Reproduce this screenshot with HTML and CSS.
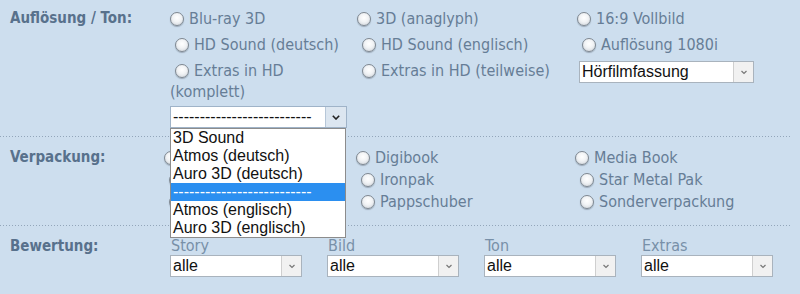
FILE: index.html
```html
<!DOCTYPE html>
<html lang="de">
<head>
<meta charset="utf-8">
<title>Filter</title>
<link rel="stylesheet" href="styles.css">
</head>
<body>
<div class="page">
  <section class="sec sec-res">
    <div class="lbl">Auflösung / Ton:</div>
    <div class="col">
      <label class="opt"><span class="radio"></span>Blu-ray 3D</label>
      <label class="opt ind"><span class="radio"></span>HD Sound (deutsch)</label>
      <label class="opt ind wrap"><span class="radio"></span>Extras in HD (komplett)</label>
      <div class="sel sel-open">
        <span class="sel-val">--------------------------</span>
        <span class="sel-btn"><svg width="8" height="5" viewBox="0 0 8 5"><polyline points="0.8,0.8 4,4 7.2,0.8" fill="none" stroke="#222" stroke-width="1.6"/></svg></span>
        <ul class="drop">
          <li>3D Sound</li>
          <li>Atmos (deutsch)</li>
          <li>Auro 3D (deutsch)</li>
          <li class="hl">--------------------------</li>
          <li>Atmos (englisch)</li>
          <li>Auro 3D (englisch)</li>
        </ul>
      </div>
    </div>
    <div class="col">
      <label class="opt"><span class="radio"></span>3D (anaglyph)</label>
      <label class="opt ind"><span class="radio"></span>HD Sound (englisch)</label>
      <label class="opt ind"><span class="radio"></span>Extras in HD (teilweise)</label>
    </div>
    <div class="col">
      <label class="opt"><span class="radio"></span>16:9 Vollbild</label>
      <label class="opt ind"><span class="radio"></span>Auflösung 1080i</label>
      <div class="sel sel-wide">
        <span class="sel-val">Hörfilmfassung</span>
        <span class="sel-btn"><svg width="8" height="5" viewBox="0 0 8 5"><polyline points="1.5,1 4,3.5 6.5,1" fill="none" stroke="#777" stroke-width="1.2"/></svg></span>
      </div>
    </div>
  </section>
  <div class="sep"></div>
  <section class="sec sec-pack">
    <div class="lbl">Verpackung:</div>
    <div class="col">
      <label class="opt"><span class="radio"></span></label>
      <label class="opt ind"><span class="radio"></span></label>
      <label class="opt ind"><span class="radio"></span></label>
    </div>
    <div class="col">
      <label class="opt"><span class="radio"></span>Digibook</label>
      <label class="opt ind"><span class="radio"></span>Ironpak</label>
      <label class="opt ind"><span class="radio"></span>Pappschuber</label>
    </div>
    <div class="col">
      <label class="opt"><span class="radio"></span>Media Book</label>
      <label class="opt ind"><span class="radio"></span>Star Metal Pak</label>
      <label class="opt ind"><span class="radio"></span>Sonderverpackung</label>
    </div>
  </section>
  <div class="sep"></div>
  <section class="sec sec-rate">
    <div class="lbl">Bewertung:</div>
    <div class="rcol">
      <div class="sub">Story</div>
      <div class="sel sel-rate"><span class="sel-val">alle</span><span class="sel-btn"><svg width="8" height="5" viewBox="0 0 8 5"><polyline points="1.5,1 4,3.5 6.5,1" fill="none" stroke="#777" stroke-width="1.2"/></svg></span></div>
    </div>
    <div class="rcol">
      <div class="sub">Bild</div>
      <div class="sel sel-rate"><span class="sel-val">alle</span><span class="sel-btn"><svg width="8" height="5" viewBox="0 0 8 5"><polyline points="1.5,1 4,3.5 6.5,1" fill="none" stroke="#777" stroke-width="1.2"/></svg></span></div>
    </div>
    <div class="rcol">
      <div class="sub">Ton</div>
      <div class="sel sel-rate"><span class="sel-val">alle</span><span class="sel-btn"><svg width="8" height="5" viewBox="0 0 8 5"><polyline points="1.5,1 4,3.5 6.5,1" fill="none" stroke="#777" stroke-width="1.2"/></svg></span></div>
    </div>
    <div class="rcol">
      <div class="sub">Extras</div>
      <div class="sel sel-rate"><span class="sel-val">alle</span><span class="sel-btn"><svg width="8" height="5" viewBox="0 0 8 5"><polyline points="1.5,1 4,3.5 6.5,1" fill="none" stroke="#777" stroke-width="1.2"/></svg></span></div>
    </div>
  </section>
</div>
</body>
</html>
```

FILE: styles.css
```css
html, body {
  margin: 0;
  padding: 0;
  background: #cddeee;
}
body {
  width: 800px;
  height: 294px;
  overflow: hidden;
  font-family: "DejaVu Sans Condensed", "DejaVu Sans", sans-serif;
  font-size: 16px;
  color: #667d96;
}
.page {
  display: flex;
  flex-direction: column;
}
.sec {
  display: grid;
  align-items: start;
}
.sec-res {
  grid-template-columns: 170px 187px 220px 1fr;
  padding: 8px 0 8px 0;
}
.sec-pack {
  grid-template-columns: 164px 192px 219px 1fr;
  padding: 10px 0 12px 0;
}
.sec-rate {
  grid-template-columns: 170px 157px 157px 157px 157px;
  padding: 11px 0 0 0;
}
.lbl {
  padding-left: 10px;
  font-weight: bold;
  font-size: 15px;
  line-height: 21px;
  color: #58718c;
}
.sec-rate .lbl {
  line-height: 19px;
}
.col {
  display: flex;
  flex-direction: column;
  align-items: flex-start;
}
.opt {
  display: block;
  height: 21px;
  line-height: 21px;
  margin-bottom: 5px;
  white-space: nowrap;
}
.sec-pack .opt {
  margin-bottom: 1px;
}
.opt.wrap {
  white-space: normal;
  width: 180px;
  height: auto;
  margin-bottom: 0;
}
.opt.ind .radio {
  margin-left: 5px;
}
.radio {
  display: inline-block;
  width: 12px;
  height: 12px;
  border: 1px solid #7f8891;
  border-radius: 50%;
  background: radial-gradient(circle at 50% 40%, #ffffff 0%, #f1f3f5 45%, #c9cfd6 100%);
  box-shadow: 0 1px 1px rgba(60, 70, 80, 0.35);
  vertical-align: -2px;
  margin-right: 5px;
}
.sel {
  position: relative;
  display: flex;
  height: 22px;
  box-sizing: border-box;
  border: 1px solid #a9b3bd;
  background: #fff;
  font-family: "Liberation Sans", Arial, sans-serif;
  font-size: 16px;
  color: #111;
}
.sel-val {
  flex: 1;
  line-height: 20px;
  padding-left: 2px;
  white-space: nowrap;
  overflow: hidden;
}
.sel-btn {
  width: 19px;
  display: flex;
  align-items: center;
  justify-content: center;
  background: #f1f1f1;
  border-left: 1px solid #cfcfcf;
}
.sel-open {
  width: 177px;
  margin-top: 4px;
  border-color: #9fb3c8;
}
.sel-open .sel-btn {
  width: 20px;
  background: #dce6f0;
  border-left-color: #b7c7d8;
}
.sel-wide {
  width: 175px;
  margin-left: 2px;
  margin-top: 1px;
}
.sel-rate {
  width: 132px;
}
.drop {
  position: absolute;
  top: 21px;
  left: -1px;
  width: 176px;
  box-sizing: border-box;
  margin: 0;
  padding: 0;
  list-style: none;
  background: #fff;
  border: 1px solid #8c8c8c;
  z-index: 5;
}
.drop li {
  height: 18px;
  line-height: 18px;
  padding-left: 2px;
  white-space: nowrap;
  overflow: hidden;
}
.drop li.hl {
  background: #2b8ff0;
  color: #fff;
}
.sep {
  height: 1px;
  width: 792px;
  background: repeating-linear-gradient(to right, #93a6ba 0 1px, transparent 1px 3px);
}
.rcol {
  display: flex;
  flex-direction: column;
}
.sub {
  line-height: 18px;
  color: #7890a8;
  padding-left: 1px;
}
```
